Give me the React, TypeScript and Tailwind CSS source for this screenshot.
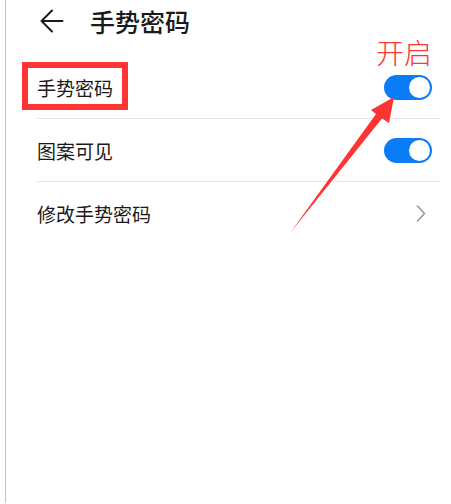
import React from "react";

function Toggle() {
  return (
    <div className="w-[48px] h-[25px] rounded-full bg-[#0a7cf6] flex items-center justify-end pr-[2px]">
      <div className="w-[21px] h-[21px] rounded-full bg-white" />
    </div>
  );
}

export default function App() {
  return (
    <div className="relative w-[451px] h-[504px] bg-white overflow-hidden font-['Noto_Sans_CJK_SC','Noto_Sans',sans-serif] text-[#1a1a1a]">
      <div className="flex h-full">
        <div className="w-[5px]" />
        <div className="w-px h-[503px] bg-[#c4c4c4]" />
        <div className="flex-1 flex flex-col">
          <div className="h-[44px] flex items-center pl-[34px] mt-[-1px]">
            <svg width="24" height="24" viewBox="0 0 24 24" fill="none" stroke="#1a1a1a" strokeWidth="2" strokeLinecap="round" strokeLinejoin="round">
              <path d="M1.5 12 H22.5 M12 1.5 L1.5 12 L12 22.5" />
            </svg>
            <span className="ml-[26px] text-[25px] font-medium leading-none">手势密码</span>
          </div>
          <div className="mt-[13px] pl-[31px] pr-[11px] flex flex-col">
            <div className="h-[63px] flex items-center justify-between border-b border-[#e6e6e6] pr-[8px]">
              <span className="text-[19px] leading-none">手势密码</span>
              <Toggle />
            </div>
            <div className="h-[63px] flex items-center justify-between border-b border-[#e6e6e6] pr-[8px]">
              <span className="text-[19px] leading-none">图案可见</span>
              <Toggle />
            </div>
            <div className="h-[63px] flex items-center justify-between pr-[14px]">
              <span className="text-[19px] leading-none">修改手势密码</span>
              <svg width="10" height="17" viewBox="0 0 10 17" fill="none" stroke="#999999" strokeWidth="1.6" strokeLinecap="round" strokeLinejoin="round">
                <path d="M1.5 1 L8.5 8.5 L1.5 16" />
              </svg>
            </div>
          </div>
        </div>
      </div>

      {/* annotations */}
      <div className="absolute left-[22px] top-[62px] w-[106px] h-[48px] border-[6px] border-[#fc3434]" />
      <div className="absolute left-[376px] top-[38px] text-[28px] leading-none text-[#fc3434] font-['Noto_Sans_CJK_SC',sans-serif] font-light">开启</div>
      <svg className="absolute left-0 top-0" width="451" height="504" viewBox="0 0 451 504">
        <polygon
          points="394,97 389,123 382,118.5 290,233 376,114 371,110"
          fill="#fc3434"
        />
      </svg>
    </div>
  );
}
